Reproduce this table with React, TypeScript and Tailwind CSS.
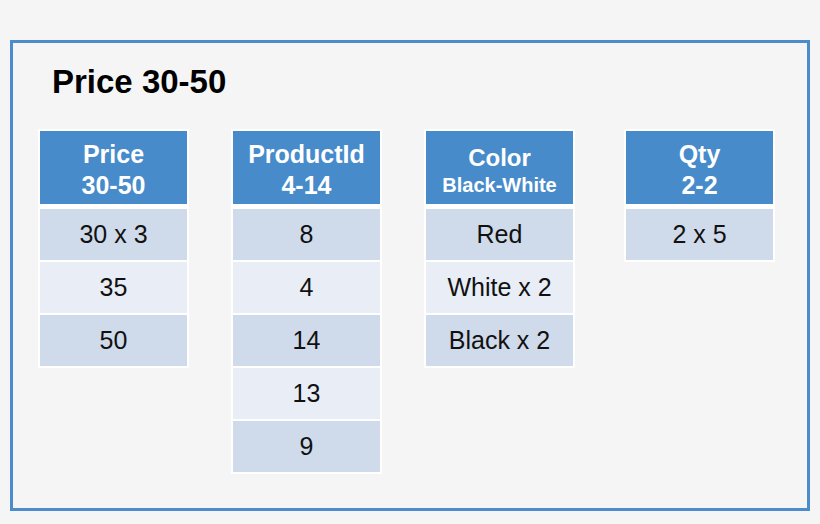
import React from "react";

type Col = { title: string; sub: string; subSmall?: boolean; rows: string[]; extraMl?: boolean };

const cols: Col[] = [
  { title: "Price", sub: "30-50", rows: ["30 x 3", "35", "50"] },
  { title: "ProductId", sub: "4-14", rows: ["8", "4", "14", "13", "9"] },
  { title: "Color", sub: "Black-White", subSmall: true, rows: ["Red", "White x 2", "Black x 2"] },
  { title: "Qty", sub: "2-2", rows: ["2 x 5"], extraMl: true },
];

function Table({ c }: { c: Col }) {
  return (
    <div className={`flex w-[151px] flex-col bg-white p-[2px] ${c.extraMl ? "ml-[7px]" : ""}`}>
      <div
        className={`mb-[5px] flex h-[73px] flex-col items-center justify-center bg-[#478bcb] font-bold text-white ${
          c.subSmall ? "pt-[6px]" : "pt-[4px]"
        }`}
      >
        {c.subSmall ? (
          <>
            <div className="text-[24px] leading-[28px]">{c.title}</div>
            <div className="text-[20px] leading-[26px]">{c.sub}</div>
          </>
        ) : (
          <>
            <div className="text-[25px] leading-[31px]">{c.title}</div>
            <div className="text-[25px] leading-[31px]">{c.sub}</div>
          </>
        )}
      </div>
      <div className="flex flex-col gap-[2px]">
        {c.rows.map((r, i) => (
          <div
            key={i}
            className={`flex h-[51px] items-center justify-center text-[25px] text-[#111111] ${
              i % 2 === 0 ? "bg-[#cfdaea]" : "bg-[#e8edf6]"
            }`}
          >
            {r}
          </div>
        ))}
      </div>
    </div>
  );
}

export default function App() {
  return (
    <div
      className="h-[524px] w-[820px] bg-[#f5f5f5] pl-[10px] pt-[40px]"
      style={{ fontFamily: '"Liberation Sans", Arial, sans-serif' }}
    >
      <div className="h-[471px] w-[800px] border-[3px] border-[#4d8ccb] pl-[25px] pt-[20px]">
        <div className="ml-[14px] text-[33px] font-bold leading-[38px] text-black">Price 30-50</div>
        <div className="mt-[28px] flex items-start gap-[42px]">
          {cols.map((c) => (
            <Table key={c.title} c={c} />
          ))}
        </div>
      </div>
    </div>
  );
}
